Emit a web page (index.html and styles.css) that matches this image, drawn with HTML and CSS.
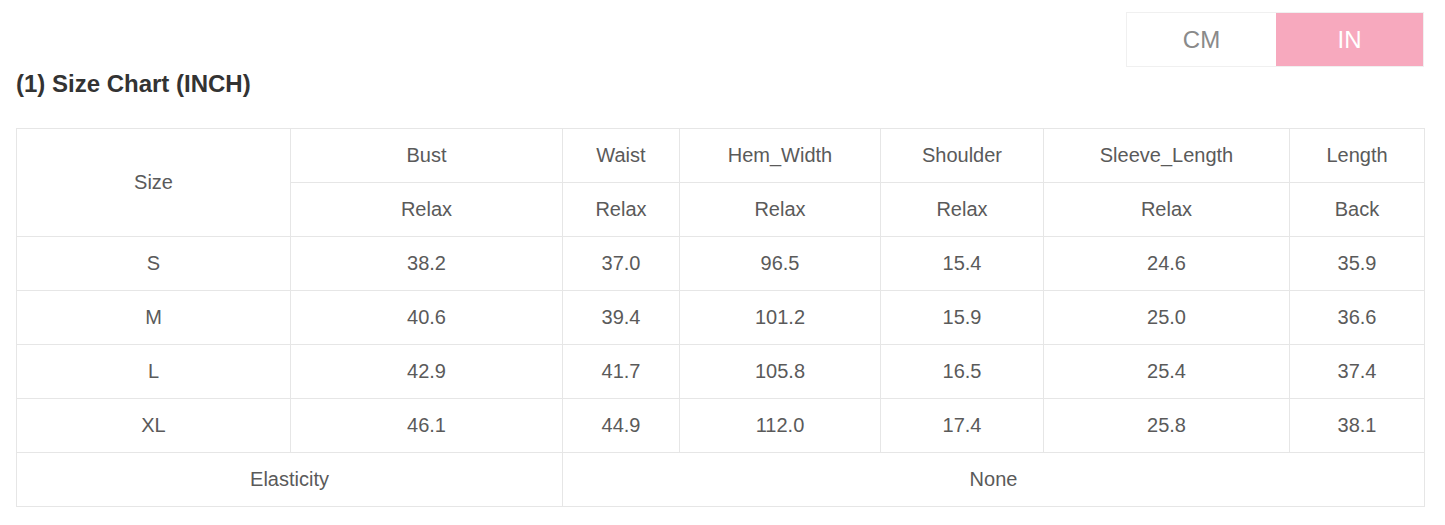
FILE: index.html
```html
<!DOCTYPE html>
<html>
<head>
<meta charset="utf-8">
<link rel="stylesheet" href="styles.css">
</head>
<body>
<div class="page">
  <div class="toolbar">
    <div class="toggle">
      <span class="opt">CM</span>
      <span class="opt active">IN</span>
    </div>
  </div>
  <h2 class="title">(1) Size Chart (INCH)</h2>
  <table class="chart">
    <colgroup>
      <col class="c1"><col class="c2"><col class="c3"><col class="c4"><col class="c5"><col class="c6"><col class="c7">
    </colgroup>
    <tr><td rowspan="2">Size</td><td>Bust</td><td>Waist</td><td>Hem_Width</td><td>Shoulder</td><td>Sleeve_Length</td><td>Length</td></tr>
    <tr><td>Relax</td><td>Relax</td><td>Relax</td><td>Relax</td><td>Relax</td><td>Back</td></tr>
    <tr><td>S</td><td>38.2</td><td>37.0</td><td>96.5</td><td>15.4</td><td>24.6</td><td>35.9</td></tr>
    <tr><td>M</td><td>40.6</td><td>39.4</td><td>101.2</td><td>15.9</td><td>25.0</td><td>36.6</td></tr>
    <tr><td>L</td><td>42.9</td><td>41.7</td><td>105.8</td><td>16.5</td><td>25.4</td><td>37.4</td></tr>
    <tr><td>XL</td><td>46.1</td><td>44.9</td><td>112.0</td><td>17.4</td><td>25.8</td><td>38.1</td></tr>
    <tr><td colspan="2">Elasticity</td><td colspan="5">None</td></tr>
  </table>
</div>
</body>
</html>
```
FILE: styles.css
```css
html, body { margin: 0; padding: 0; background: #fff; }
.page { padding: 12px 21px 0 16px; font-family: "Liberation Sans", Arial, sans-serif; }
.toolbar { display: flex; justify-content: flex-end; }
.toggle { display: flex; border: 1px solid #f0f0f0; box-sizing: border-box; height: 55px; }
.opt { width: 149px; display: flex; align-items: center; justify-content: center; font-size: 24px; color: #8a8a8a; }
.opt.active { background: #f7a9be; color: #fff; width: 147px; }
.title { margin: 3px 0 30px 0; font-size: 24px; line-height: 28px; font-weight: bold; color: #333; }
.chart { border-collapse: collapse; width: 1408px; table-layout: fixed; }
.c1 { width: 274px; } .c2 { width: 272px; } .c3 { width: 117px; } .c4 { width: 201px; } .c5 { width: 163px; } .c6 { width: 246px; } .c7 { width: 135px; }
.chart td { border: 1px solid #e6e6e6; height: 53px; padding: 0; text-align: center; font-size: 20px; color: #5a5a5a; }
```
